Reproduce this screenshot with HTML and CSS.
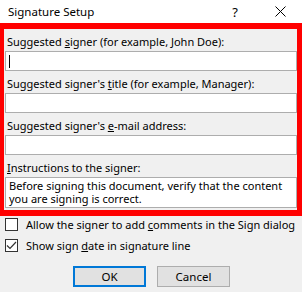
FILE: index.html
```html
<!DOCTYPE html>
<html lang="en">
<head>
  <meta charset="UTF-8">
  <meta name="viewport" content="width=device-width, initial-scale=1.0">
  <title>Signature Setup</title>
  <link rel="stylesheet" href="styles.css">
</head>
<body>
  <div class="dialog">
    <div class="titlebar">
      <span class="title">Signature Setup</span>
      <span class="help">?</span>
      <span class="close">
        <svg width="11" height="11" viewBox="0 0 11 11">
          <path d="M0.5 0.5 L10.5 10.5 M10.5 0.5 L0.5 10.5" stroke="#000" stroke-width="1" fill="none"/>
        </svg>
      </span>
    </div>

    <div class="content">
      <div class="highlight">
        <div class="field">
          <label for="signer">Suggested <u>s</u>igner (for example, John Doe):</label>
          <div class="textbox" id="signer"><span class="caret"></span></div>
        </div>

        <div class="field">
          <label for="title">Suggested signer's <u>t</u>itle (for example, Manager):</label>
          <div class="textbox" id="title"></div>
        </div>

        <div class="field">
          <label for="email">Suggested signer's <u>e</u>-mail address:</label>
          <div class="textbox" id="email"></div>
        </div>

        <div class="field">
          <label for="instructions"><u>I</u>nstructions to the signer:</label>
          <div class="textbox textarea" id="instructions">Before signing this document, verify that the content you are signing is correct.</div>
        </div>
      </div>

      <div class="checks">
        <div class="check-row">
          <span class="checkbox"></span>
          <span>Allow the signer to add <u>c</u>omments in the Sign dialog</span>
        </div>
        <div class="check-row">
          <span class="checkbox">
            <svg width="11" height="11" viewBox="0 0 11 11">
              <path d="M1 5.5 L4 8.5 L10 2" stroke="#333" stroke-width="1.2" fill="none"/>
            </svg>
          </span>
          <span>Show sign <u>d</u>ate in signature line</span>
        </div>
      </div>

      <div class="buttons">
        <button class="btn btn-default">OK</button>
        <button class="btn">Cancel</button>
      </div>
    </div>
  </div>
</body>
</html>
```

FILE: styles.css
```css
:root {
  --face-color: #f0f0f0;
  --border-color: #adadad;
  --accent-color: #0078d7;
  --mark-color: #ff0000;
}

* {
  box-sizing: border-box;
}

body {
  margin: 0;
  font-family: "Noto Sans", "Liberation Sans", sans-serif;
  font-size: 11px;
  color: #000;
  background: var(--face-color);
}

.dialog {
  width: 302px;
  height: 292px;
  overflow: hidden;
}

.titlebar {
  height: 23px;
  background: #fff;
  display: flex;
  align-items: center;
  padding: 0 0 0 8px;
}

.title {
  flex: 1;
  font-size: 11.5px;
}

.help {
  width: 12px;
  margin-right: 34px;
  font-size: 13px;
  text-align: center;
}

.close {
  width: 11px;
  height: 11px;
  margin-right: 16px;
  display: flex;
}

.highlight {
  border-style: solid;
  border-color: var(--mark-color);
  border-width: 6px 5px 6px 4px;
  padding: 5px 0 2px 1px;
}

.field {
  margin-bottom: 5px;
}

.field:last-child {
  margin-bottom: 0;
}

label {
  display: block;
  height: 16px;
  line-height: 16px;
  padding-left: 2px;
  margin-bottom: 1px;
  white-space: nowrap;
}

.textbox {
  height: 20px;
  background: #fff;
  border: 1px solid var(--border-color);
  padding: 2px 3px;
  position: relative;
}

.caret {
  position: absolute;
  left: 3px;
  top: 3px;
  width: 1px;
  height: 13px;
  background: #000;
}

.textarea {
  height: 31px;
  padding: 1px 3px;
  line-height: 13px;
}

.checks {
  display: flex;
  flex-direction: column;
  gap: 8px;
  padding: 2px 0 0 5px;
}

.check-row {
  display: flex;
  align-items: center;
  height: 13px;
  white-space: nowrap;
}

.checkbox {
  flex-shrink: 0;
  width: 13px;
  height: 13px;
  border: 1px solid #333;
  background: #fff;
  margin-right: 8px;
  display: flex;
  align-items: center;
  justify-content: center;
}

.buttons {
  display: flex;
  gap: 11px;
  padding-left: 73px;
  margin-top: 14px;
}

.btn {
  width: 73px;
  height: 21px;
  font-family: inherit;
  font-size: 11.5px;
  background: #e1e1e1;
  border: 1px solid var(--border-color);
  padding: 0;
  color: #000;
}

.btn-default {
  border: 2px solid var(--accent-color);
}
```
